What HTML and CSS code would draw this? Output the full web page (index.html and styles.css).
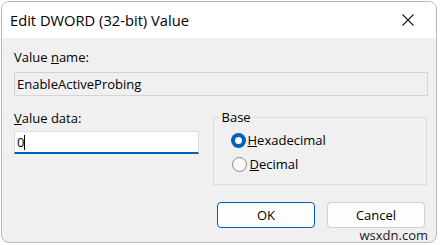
FILE: index.html
```html
<!DOCTYPE html>
<html lang="en">
  <head>
    <meta charset="UTF-8" />
    <meta name="viewport" content="width=device-width, initial-scale=1.0" />
    <title>Edit DWORD (32-bit) Value</title>
    <link rel="stylesheet" href="styles.css">
  </head>
  <body>
    <div class="dialog">
      <div class="titlebar">
        <span class="title">Edit DWORD (32-bit) Value</span>
        <button class="close" type="button" aria-label="Close">
          <svg width="12" height="12" viewBox="0 0 12 12">
            <path d="M0.5 0.5 L11.5 11.5 M11.5 0.5 L0.5 11.5" stroke="#1a1a1a" stroke-width="1.1" fill="none" />
          </svg>
        </button>
      </div>
      <form class="content" id="dword-form">
        <label class="field-label" for="value_name">Value <u>n</u>ame:</label>
        <input class="name-input" type="text" id="value_name" value="EnableActiveProbing" readonly />
        <div class="lower">
          <div class="data-col">
            <label class="field-label" for="value_data"><u>V</u>alue data:</label>
            <div class="data-input">0<span class="caret"></span></div>
          </div>
          <fieldset class="base">
            <legend>Base</legend>
            <label class="radio-row">
              <span class="radio checked"></span>
              <span><u>H</u>exadecimal</span>
            </label>
            <label class="radio-row">
              <span class="radio"></span>
              <span><u>D</u>ecimal</span>
            </label>
          </fieldset>
        </div>
        <div class="buttons">
          <button type="submit" class="btn default">OK</button>
          <button type="button" class="btn">Cancel</button>
        </div>
      </form>
    </div>
    <div class="watermark">wsxdn.com</div>
  </body>
</html>
```

FILE: styles.css
```css
body {
  margin: 0;
  padding: 0;
  background-color: #fff;
  font-family: "Open Sans", "Noto Sans", sans-serif;
  font-size: 13px;
  color: #000;
  position: relative;
  width: 440px;
  height: 245px;
  overflow: hidden;
}
.dialog {
  margin: 1px 3px 0 1px;
  height: 240px;
  border: 1px solid #b9b9b9;
  border-radius: 8px;
  overflow: hidden;
  background-color: #f0f0f0;
}
.titlebar {
  height: 36px;
  background-color: #fff;
  display: flex;
  align-items: center;
  justify-content: space-between;
  padding-left: 8px;
}
.title {
  font-size: 14.7px;
  margin-top: -1px;
}
.close {
  border: none;
  background: none;
  padding: 0;
  width: 46px;
  height: 36px;
  display: flex;
  align-items: center;
  justify-content: center;
  margin-right: 5px;
}
.content {
  padding: 11px 9px 0 12px;
}
.field-label {
  display: block;
  line-height: 16px;
  height: 16px;
}
.name-input {
  display: block;
  box-sizing: border-box;
  width: 414px;
  height: 24px;
  margin-top: 7px;
  padding: 0 2px;
  border: 1px solid #d4d4d4;
  background-color: #f0f0f0;
  font-family: inherit;
  font-size: 13px;
  color: #000;
}
.lower {
  display: flex;
  gap: 14px;
  margin-top: 13px;
}
.data-col {
  width: 185px;
  padding-top: 1px;
}
.data-input {
  box-sizing: border-box;
  height: 23px;
  margin-top: 5px;
  padding: 2px 2px 0;
  background-color: #fff;
  border: 1px solid #dcdcdc;
  border-bottom: 2px solid #005fb8;
  line-height: 17px;
  font-size: 13px;
}
.caret {
  display: inline-block;
  width: 1px;
  height: 15px;
  background-color: #000;
  vertical-align: -3px;
}
.base {
  width: 215px;
  box-sizing: border-box;
  margin: 0;
  padding: 3px 0 8px 18px;
  height: 76px;
  border: 1px solid #dcdcdc;
}
.base legend {
  padding: 0 2px;
  margin-left: -12px;
  line-height: 16px;
}
.radio-row {
  display: flex;
  align-items: center;
  gap: 3px;
  height: 24px;
}
.radio {
  width: 13px;
  height: 13px;
  border: 1px solid #8a8a8a;
  border-radius: 50%;
  background-color: #f8f8f8;
  position: relative;
}
.radio.checked {
  width: 15px;
  height: 15px;
  border: none;
  background-color: #005fb8;
  margin-left: -1px;
  margin-right: -1px;
}
.radio.checked::after {
  content: "";
  position: absolute;
  left: 4px;
  top: 4px;
  width: 7px;
  height: 7px;
  border-radius: 50%;
  background-color: #fff;
}
.buttons {
  display: flex;
  justify-content: flex-end;
  gap: 12px;
  margin-top: 17px;
  padding-right: 2px;
}
.btn {
  width: 98px;
  height: 26px;
  border: 1px solid #d0d0d0;
  border-radius: 4px;
  background-color: #fdfdfd;
  font-family: inherit;
  font-size: 13px;
  color: #000;
  padding: 0;
}
.btn.default {
  border-color: #005fb8;
}
.watermark {
  position: absolute;
  right: 12px;
  bottom: 2px;
  font-size: 13px;
  line-height: 15px;
  color: #1a1a1a;
}
```
